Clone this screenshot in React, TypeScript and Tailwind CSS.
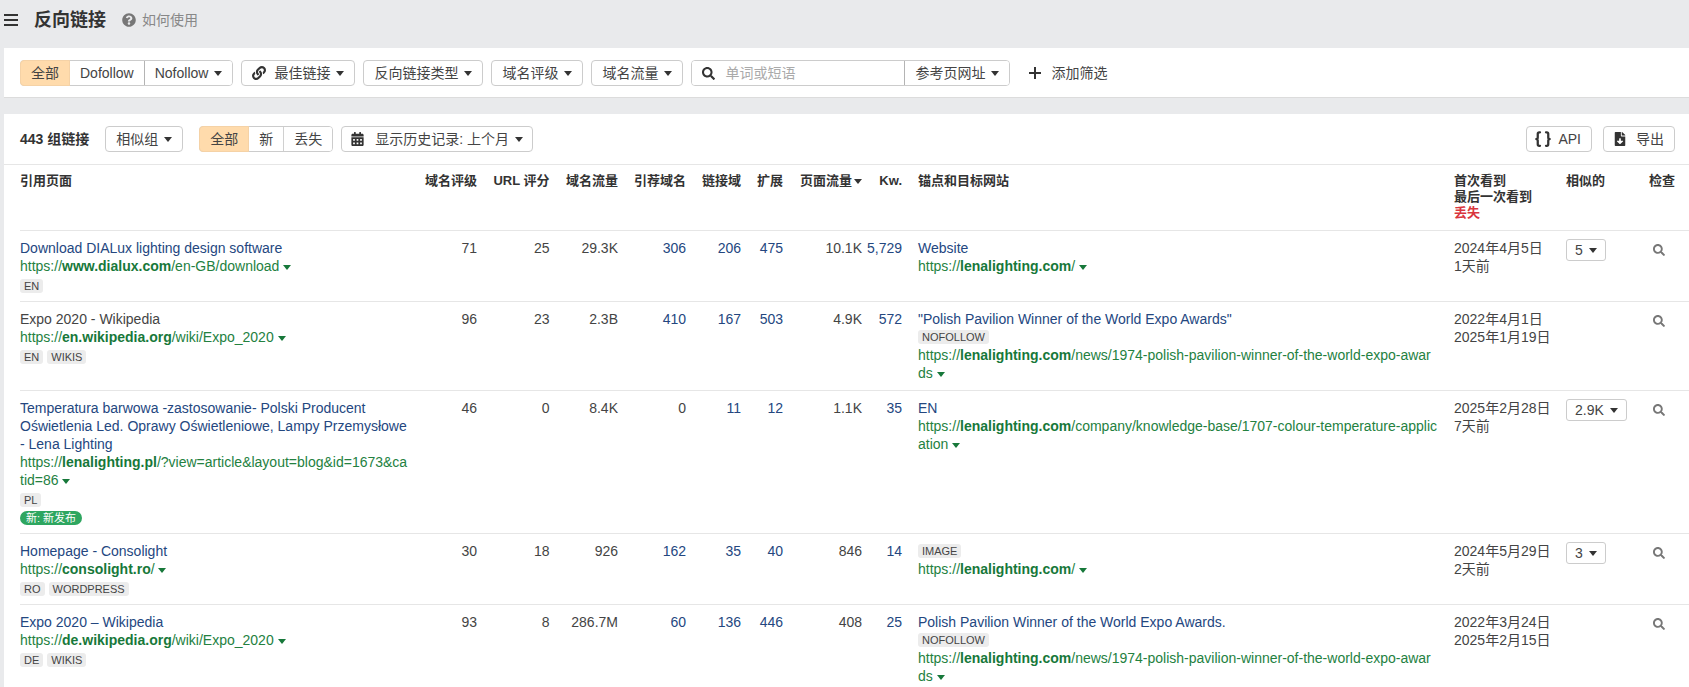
import React from "react";
import { FaLink, FaSearch, FaQuestionCircle, FaCalendarAlt, FaFileDownload } from "react-icons/fa";
import { Braces } from "lucide-react";

const Caret = ({ className = "text-[#333]" }: { className?: string }) => (
  <svg viewBox="0 0 8 5" className={`inline-block w-[8px] h-[5px] shrink-0 ${className}`}>
    <polygon points="0,0 8,0 4,5" fill="currentColor" />
  </svg>
);

const Btn = ({ children, className = "" }: { children: React.ReactNode; className?: string }) => (
  <div className={`flex items-center h-[26px] px-[10px] gap-[6px] bg-white border border-[#cccccc] rounded-[4px] text-[#444] whitespace-nowrap ${className}`}>
    {children}
  </div>
);

const Seg = ({ items, divider = "border-[#b4b4b4]" }: { items: React.ReactNode[]; divider?: string }) => (
  <div className="flex h-[26px] border border-[#cccccc] rounded-[4px]">
    {items.map((it, i) => (
      <div
        key={i}
        className={
          i === 0
            ? "flex items-center px-[10px] -my-px -ml-px whitespace-nowrap text-[#444] bg-[#ffdbac] border border-[#f5d2a6] rounded-l-[4px]"
            : `flex items-center gap-[6px] px-[10px] whitespace-nowrap text-[#444] bg-white rounded-r-[3px] ${i > 1 ? `border-l ${divider}` : ""}`
        }
      >
        {it}
      </div>
    ))}
  </div>
);

const Tag = ({ children }: { children: React.ReactNode }) => (
  <span className="inline-flex items-center h-[14px] px-[4px] rounded-[3px] bg-[#ececec] text-[11px] leading-[14px] text-[#444]">{children}</span>
);

const Url = ({ pre = "https://", host, rest }: { pre?: string; host: string; rest: string }) => (
  <div className="text-[#24813f] break-all">
    {pre}
    <b className="font-bold text-[#17783a]">{host}</b>
    {rest} <Caret className="text-[#17783a] align-middle" />
  </div>
);

const grid = "grid grid-cols-[400px_57px_72.5px_68.5px_68px_55px_42px_79px_40px_552px_112px_83px_26px]";

const Num = ({ v, link }: { v: string; link?: boolean }) => (
  <div className={`text-right ${link ? "text-[#24477f]" : "text-[#444]"}`}>{v}</div>
);

type Row = {
  title: string;
  titleDark?: boolean;
  url: React.ReactNode;
  tags: string[];
  fresh?: boolean;
  nums: string[];
  anchor?: string;
  nofollow?: boolean;
  image?: boolean;
  target: React.ReactNode;
  d1: string;
  d2: string;
  sim?: string;
};

const rows: Row[] = [
  {
    title: "Download DIALux lighting design software",
    url: <Url host="www.dialux.com" rest="/en-GB/download" />,
    tags: ["EN"],
    nums: ["71", "25", "29.3K", "306", "206", "475", "10.1K", "5,729"],
    anchor: "Website",
    target: <Url host="lenalighting.com" rest="/" />,
    d1: "2024年4月5日",
    d2: "1天前",
    sim: "5",
  },
  {
    title: "Expo 2020 - Wikipedia",
    titleDark: true,
    url: <Url host="en.wikipedia.org" rest="/wiki/Expo_2020" />,
    tags: ["EN", "WIKIS"],
    nums: ["96", "23", "2.3B", "410", "167", "503", "4.9K", "572"],
    anchor: "\"Polish Pavilion Winner of the World Expo Awards\"",
    nofollow: true,
    target: <Url host="lenalighting.com" rest="/news/1974-polish-pavilion-winner-of-the-world-expo-awards" />,
    d1: "2022年4月1日",
    d2: "2025年1月19日",
  },
  {
    title: "Temperatura barwowa -zastosowanie- Polski Producent Oświetlenia Led. Oprawy Oświetleniowe, Lampy Przemysłowe - Lena Lighting",
    url: <Url host="lenalighting.pl" rest="/?view=article&layout=blog&id=1673&catid=86" />,
    tags: ["PL"],
    fresh: true,
    nums: ["46", "0", "8.4K", "0", "11", "12", "1.1K", "35"],
    anchor: "EN",
    target: <Url host="lenalighting.com" rest="/company/knowledge-base/1707-colour-temperature-application" />,
    d1: "2025年2月28日",
    d2: "7天前",
    sim: "2.9K",
  },
  {
    title: "Homepage - Consolight",
    url: <Url host="consolight.ro" rest="/" />,
    tags: ["RO", "WORDPRESS"],
    nums: ["30", "18", "926", "162", "35", "40", "846", "14"],
    image: true,
    target: <Url host="lenalighting.com" rest="/" />,
    d1: "2024年5月29日",
    d2: "2天前",
    sim: "3",
  },
  {
    title: "Expo 2020 – Wikipedia",
    url: <Url host="de.wikipedia.org" rest="/wiki/Expo_2020" />,
    tags: ["DE", "WIKIS"],
    nums: ["93", "8", "286.7M", "60", "136", "446", "408", "25"],
    anchor: "Polish Pavilion Winner of the World Expo Awards.",
    nofollow: true,
    target: <Url host="lenalighting.com" rest="/news/1974-polish-pavilion-winner-of-the-world-expo-awards" />,
    d1: "2022年3月24日",
    d2: "2025年2月15日",
  },
];

const heads: [string, boolean?][] = [
  ["域名评级"],
  ["URL 评分"],
  ["域名流量"],
  ["引荐域名"],
  ["链接域"],
  ["扩展"],
  ["页面流量", true],
  ["Kw."],
];

export default function App() {
  return (
    <div
      className="h-screen overflow-hidden bg-[#e9eaec] text-[14px] leading-[18px] text-[#444]"
      style={{ fontFamily: '"Liberation Sans","Noto Sans CJK SC",sans-serif' }}
    >
      <div className="flex items-center h-[48px] pb-[8px] pl-[4px]">
        <svg viewBox="0 0 14 12" className="w-[14px] h-[12px] text-[#333]">
          <path d="M0 1h14M0 6h14M0 11h14" stroke="currentColor" strokeWidth="1.8" />
        </svg>
        <h1 className="ml-[16px] text-[18px] leading-[24px] font-bold text-[#333]">反向链接</h1>
        <FaQuestionCircle className="ml-[16px] w-[14px] h-[14px] text-[#777]" />
        <span className="ml-[6px] text-[#888]">如何使用</span>
      </div>

      <div className="ml-[4px] h-[50px] bg-white border-b border-[#dcdcdc] pl-[16px] pt-[12px] flex gap-[8px]">
        <Seg items={["全部", "Dofollow", <>Nofollow <Caret /></>]} />
        <Btn><FaLink className="w-[14px] h-[14px] text-[#333]" /><span className="ml-[2px]">最佳链接</span><Caret /></Btn>
        <Btn>反向链接类型<Caret /></Btn>
        <Btn>域名评级<Caret /></Btn>
        <Btn>域名流量<Caret /></Btn>
        <div className="flex h-[26px] border border-[#cccccc] rounded-[4px] overflow-hidden">
          <div className="w-[212px] flex items-center pl-[10px] gap-[10px] bg-white">
            <FaSearch className="w-[13px] h-[13px] text-[#333]" />
            <span className="text-[#aaa]">单词或短语</span>
          </div>
          <div className="flex items-center gap-[6px] px-[10px] border-l border-[#b4b4b4] bg-white whitespace-nowrap">参考页网址<Caret /></div>
        </div>
        <div className="flex items-center h-[26px] ml-[11px] gap-[10px] whitespace-nowrap">
          <svg viewBox="0 0 12 12" className="w-[12px] h-[12px] text-[#333]">
            <path d="M6 0v12M0 6h12" stroke="currentColor" strokeWidth="2" />
          </svg>
          添加筛选
        </div>
      </div>

      <div className="ml-[4px] mt-[16px] bg-white">
        <div className="h-[50px] pl-[16px] pr-[14px] pt-[12px] flex">
          <b className="font-bold text-[#333] leading-[26px]">443 组链接</b>
          <Btn className="ml-[16px]">相似组<Caret /></Btn>
          <div className="ml-[16px]"><Seg items={["全部", "新", "丢失"]} divider="border-[#d0d0d0]" /></div>
          <Btn className="ml-[8px] pr-[9px]"><FaCalendarAlt className="-ml-[1px] w-[13px] h-[14px] text-[#333]" /><span className="ml-[5px]">显示历史记录: 上个月</span><Caret /></Btn>
          <div className="ml-auto flex gap-[11px]">
            <Btn><Braces className="w-[18px] h-[18px] -ml-[3px] text-[#333]" strokeWidth={3} /><span>API</span></Btn>
            <Btn className="gap-[10px]"><FaFileDownload className="w-[12px] h-[14px] text-[#333]" /><span>导出</span></Btn>
          </div>
        </div>
        <div className={`${grid} pl-[16px] h-[66px] border-t border-[#e6e6e6] pt-[8px] text-[13px] leading-[16px] font-bold text-[#333]`}>
          <div>引用页面</div>
          {heads.map(([h, c]) => (
            <div key={h} className="text-right whitespace-nowrap">
              {h}{c && <Caret className="ml-[2px] align-middle" />}
            </div>
          ))}
          <div className="pl-[16px]">锚点和目标网站</div>
          <div>首次看到<br />最后一次看到<br /><span className="text-[#d9363e]">丢失</span></div>
          <div>相似的</div>
          <div className="whitespace-nowrap">检查</div>
        </div>
        <div className="pl-[16px]">
          {rows.map((r) => (
            <div key={r.title} className={`${grid} border-t border-[#e6e6e6] pt-[8px] pb-[8px]`}>
              <div className="pr-[12px]">
                <div className={r.titleDark ? "text-[#444]" : "text-[#24477f]"}>{r.title}</div>
                {r.url}
                <div className="mt-[4px] flex gap-[4px]">{r.tags.map((t) => <Tag key={t}>{t}</Tag>)}</div>
                {r.fresh && (
                  <div className="mt-[4px] flex">
                    <span className="h-[14px] px-[6px] rounded-full bg-[#2ea660] text-white text-[11px] leading-[14px]">新: 新发布</span>
                  </div>
                )}
              </div>
              {r.nums.map((n, i) => (
                <Num key={i} v={n} link={i >= 3 && i !== 6 && n !== "0"} />
              ))}
              <div className="pl-[16px] pr-[16px]">
                {r.anchor && <div className="text-[#24477f]">{r.anchor}</div>}
                {r.nofollow && <div className="flex h-[18px] items-center"><Tag>NOFOLLOW</Tag></div>}
                {r.image && <div className="flex h-[18px] items-center"><Tag>IMAGE</Tag></div>}
                {r.target}
              </div>
              <div>{r.d1}<br />{r.d2}</div>
              <div>
                {r.sim && (
                  <div className="inline-flex items-center gap-[6px] h-[22px] px-[8px] border border-[#cccccc] rounded-[3px]">
                    {r.sim}<Caret />
                  </div>
                )}
              </div>
              <div className="pt-[5px] pl-[4px]">
                <FaSearch className="w-[12px] h-[12px] text-[#777]" />
              </div>
            </div>
          ))}
        </div>
      </div>
    </div>
  );
}
